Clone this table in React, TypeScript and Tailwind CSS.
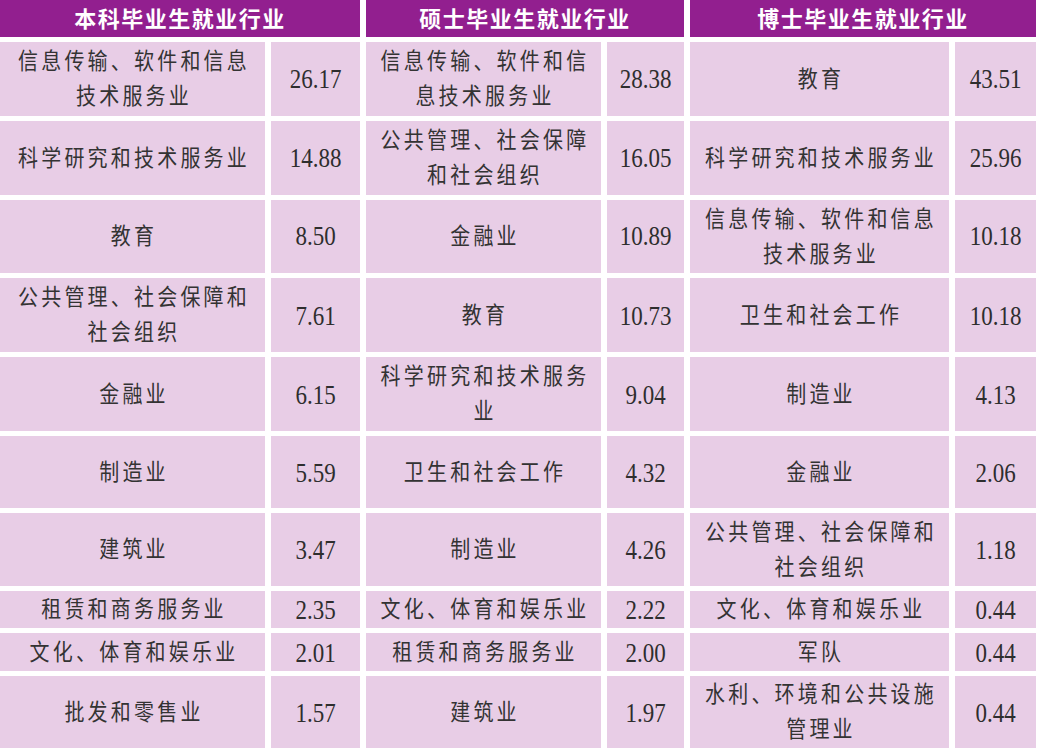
type Entry = { name: string[]; value: string };

// three groups side by side, ten rows each; line breaks follow the printed table
const GROUPS: { title: string; rows: Entry[] }[] = [
  {
    title: "本科毕业生就业行业",
    rows: [
      { name: ["信息传输、软件和信息", "技术服务业"], value: "26.17" },
      { name: ["科学研究和技术服务业"], value: "14.88" },
      { name: ["教育"], value: "8.50" },
      { name: ["公共管理、社会保障和", "社会组织"], value: "7.61" },
      { name: ["金融业"], value: "6.15" },
      { name: ["制造业"], value: "5.59" },
      { name: ["建筑业"], value: "3.47" },
      { name: ["租赁和商务服务业"], value: "2.35" },
      { name: ["文化、体育和娱乐业"], value: "2.01" },
      { name: ["批发和零售业"], value: "1.57" },
    ],
  },
  {
    title: "硕士毕业生就业行业",
    rows: [
      { name: ["信息传输、软件和信", "息技术服务业"], value: "28.38" },
      { name: ["公共管理、社会保障", "和社会组织"], value: "16.05" },
      { name: ["金融业"], value: "10.89" },
      { name: ["教育"], value: "10.73" },
      { name: ["科学研究和技术服务", "业"], value: "9.04" },
      { name: ["卫生和社会工作"], value: "4.32" },
      { name: ["制造业"], value: "4.26" },
      { name: ["文化、体育和娱乐业"], value: "2.22" },
      { name: ["租赁和商务服务业"], value: "2.00" },
      { name: ["建筑业"], value: "1.97" },
    ],
  },
  {
    title: "博士毕业生就业行业",
    rows: [
      { name: ["教育"], value: "43.51" },
      { name: ["科学研究和技术服务业"], value: "25.96" },
      { name: ["信息传输、软件和信息", "技术服务业"], value: "10.18" },
      { name: ["卫生和社会工作"], value: "10.18" },
      { name: ["制造业"], value: "4.13" },
      { name: ["金融业"], value: "2.06" },
      { name: ["公共管理、社会保障和", "社会组织"], value: "1.18" },
      { name: ["文化、体育和娱乐业"], value: "0.44" },
      { name: ["军队"], value: "0.44" },
      { name: ["水利、环境和公共设施", "管理业"], value: "0.44" },
    ],
  },
];

function NameCell({ lines }: { lines: string[] }) {
  return (
    <div className="flex items-center justify-center bg-[#e8cde6]">
      <div className="scale-y-[1.12] text-center text-[20px] leading-[31px] tracking-[3.2px] pl-[3px] text-[#333]">
        {lines.map((l) => (
          <div key={l} className="whitespace-nowrap">
            {l}
          </div>
        ))}
      </div>
    </div>
  );
}

function ValueCell({ value }: { value: string }) {
  return (
    <div className="flex items-center justify-center bg-[#e8cde6]">
      <span className="scale-y-[1.2] text-[23px] leading-none text-[#2e2e2e]">{value}</span>
    </div>
  );
}

export default function App() {
  const rowCount = GROUPS[0].rows.length;
  return (
    <div
      className="h-[751px] w-[1037px] overflow-hidden bg-white"
      style={{ fontFamily: '"Liberation Serif", "Noto Sans CJK SC", serif' }}
    >
      <div className="grid grid-cols-[265px_89px_235px_77px_259px_81px] grid-rows-[37px_74px_74px_73px_74px_74px_72px_73px_37px_38px_72px] gap-x-[6px] gap-y-[5px]">
        {GROUPS.map((g) => (
          <div
            key={g.title}
            className="col-span-2 flex items-center justify-center bg-[#921f8f] pb-[2px] text-[22px] font-bold tracking-[1.5px] text-white"
            style={{ fontFamily: '"Noto Sans CJK SC", sans-serif' }}
          >
            {g.title}
          </div>
        ))}
        {Array.from({ length: rowCount }).flatMap((_, i) =>
          GROUPS.flatMap((g) => [
            <NameCell key={`${g.title}-n-${i}`} lines={g.rows[i].name} />,
            <ValueCell key={`${g.title}-v-${i}`} value={g.rows[i].value} />,
          ])
        )}
      </div>
    </div>
  );
}
